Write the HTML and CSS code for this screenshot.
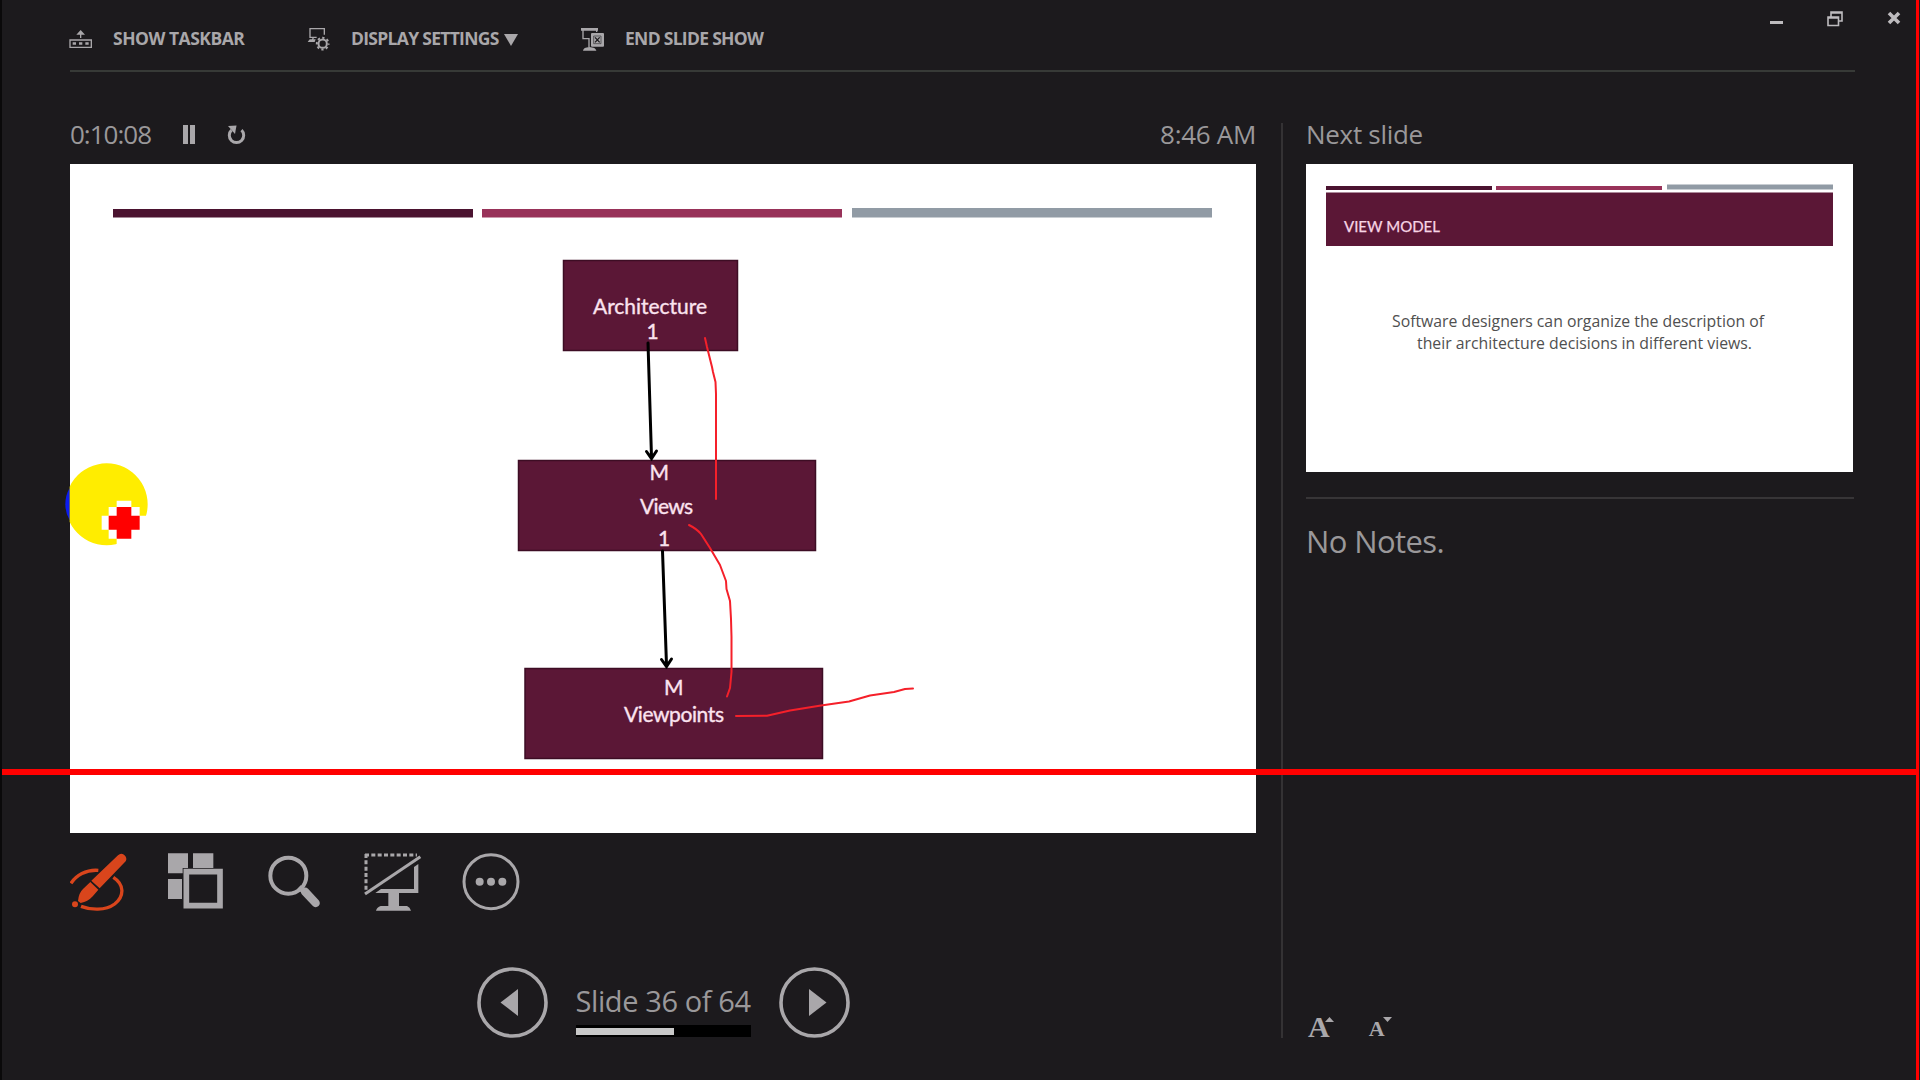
FILE: index.html
```html
<!DOCTYPE html>
<html lang="en">
<head>
<meta charset="utf-8">
<title>Presenter View</title>
<link rel="stylesheet" href="styles.css">
</head>
<body>
<div class="presenter">
  <header class="topbar">
    <nav class="commands">
      <button class="command taskbar">
        <svg width="24" height="24" viewBox="57 54 72 72"><path fill="none" stroke="currentColor" stroke-width="4" d="M60 90h64v22H60zM92 84V66"/><path fill="currentColor" d="M92 60l13 14H79zM68 97h10v7H68zM87 97h10v7H87zM106 97h10v7h-10z"/></svg>
        <span>SHOW TASKBAR</span>
      </button>
      <button class="command display">
        <svg width="24" height="24" viewBox="771 54 72 72"><path fill="none" stroke="currentColor" stroke-width="4" d="M780 82V56h43v18M778 82h22M790 82l-3 10"/><path fill="currentColor" d="M779 88h18l-3 8h-21z"/><circle cx="818" cy="101" r="12.500" fill="none" stroke="currentColor" stroke-width="6"/><circle cx="818" cy="101" r="17.500" fill="none" stroke="currentColor" stroke-width="6" stroke-dasharray="6.87 6.87" stroke-dashoffset="3.440"/></svg>
        <span>DISPLAY SETTINGS</span>
        <svg class="caret" width="14" height="12" viewBox="0 0 14 12"><path fill="currentColor" d="M0 0h14L7 12z"/></svg>
      </button>
      <button class="command end">
        <svg width="24" height="24" viewBox="393 54 72 72"><path fill="none" stroke="currentColor" stroke-width="4" d="M399 58v28h18v26M440 58v8"/><path fill="currentColor" d="M393 54h51v8h-51zM399 122c1-7 7-10 19-11 13 1 19 4 21 11z"/><rect x="423" y="69" width="39" height="41" rx="3" fill="currentColor"/><path fill="none" stroke="#1c1a1d" stroke-width="3" d="M431 78h22v23h-22z" opacity=".55"/><path fill="none" stroke="#1c1a1d" stroke-width="4" d="M435 82l14 15M449 82l-14 15"/></svg>
        <span>END SLIDE SHOW</span>
      </button>
    </nav>
    <div class="window-controls">
      <svg width="14" height="16" viewBox="0 0 14 16"><path fill="currentColor" d="M0 10h13v3H0z"/></svg>
      <svg width="16" height="16" viewBox="0 0 16 16"><path fill="none" stroke="currentColor" stroke-width="1.6" d="M4 6V1h11v9h-3M1 6h10.500v8.500H1zM4 2h11M1 7h11"/></svg>
      <svg width="14" height="14" viewBox="0 0 14 14"><path fill="none" stroke="currentColor" stroke-width="3.600" d="M2 2l10 10M12 2L2 12"/></svg>
    </div>
  </header>
  <hr class="top-rule">

  <main class="workspace">
    <section class="current">
      <div class="status">
        <span class="elapsed">0:10:08</span>
        <svg class="pause" width="12" height="19" viewBox="0 0 12 19"><path fill="currentColor" d="M0 0h5v19H0zM7 0h5v19H7z"/></svg>
        <svg class="restart" width="19" height="20" viewBox="0 0 19 20"><path fill="none" stroke="currentColor" stroke-width="3" d="M4.500 5.200A7.200 7.200 0 1 0 14.500 5.200"/><path fill="currentColor" d="M1 1l8.500-.5L8 9z"/></svg>
        <span class="clock">8:46 AM</span>
      </div>

      <svg class="slide" width="1186" height="669" viewBox="70 164 1186 669">
        <rect x="113" y="209" width="360" height="8.500" fill="#4b1330"/>
        <rect x="482" y="209" width="360" height="8.500" fill="#983259"/>
        <rect x="852" y="208" width="360" height="9.500" fill="#919ba5"/>
        <g class="box">
          <rect x="563.500" y="260.500" width="174" height="90"/>
          <rect x="518.500" y="460.500" width="297" height="90"/>
          <rect x="525" y="668.500" width="297.500" height="90"/>
        </g>
        <g class="arrow">
          <path d="M648 343l3.500 114M646.500 451.500l5 7 5-7.500"/>
          <path d="M662.500 551l4 114M661.500 659.500l5 7 5-7.500"/>
        </g>
        <g class="label">
          <text x="593" y="314" textLength="114">Architecture</text>
          <text x="646.500" y="338.500">1</text>
          <text x="649.500" y="479.500" textLength="18">M</text>
          <text x="640" y="514" textLength="53">Views</text>
          <text x="658" y="546">1</text>
          <text x="664" y="694.500" textLength="18">M</text>
          <text x="624" y="721.500" textLength="100">Viewpoints</text>
        </g>
        <g class="ink">
          <path d="M705 338l2 9 5 20 1 5 2.500 10 .5 12v105"/>
          <path d="M689 525q8 4 12 9l9 14 10 17 6 16 .5 8 3.500 12 1 18 .5 18v35l-1.500 16-3 8.500"/>
          <path d="M736 716l31-.3 23-5.200 31-5 28-4 21-6 24-3.500 11-3 8-.5"/>
        </g>
      </svg>

      <div class="tools">
        <svg class="pen" width="58" height="60" viewBox="60 66 174 180"><path fill="none" stroke="currentColor" stroke-width="10" d="M63 160C78 137 108 118 145 121M190 142C223 163 224 198 194 222C166 243 122 240 93 229"/><path fill="currentColor" d="M204 76q8-8 18-2 11 9 5 20l-78 81-25-23zM121 156l24 23-16 19q-15 17-37 21l-8-6q2-24 15-36z"/><circle cx="75" cy="223" r="9" fill="currentColor"/></svg>
        <svg width="58" height="60" viewBox="354 66 174 180"><path fill="currentColor" d="M354 70h60v44h-16v16h-44zM429 70h61v44h-61zM354 147h42v60h-42z"/><path fill="none" stroke="currentColor" stroke-width="17" d="M409 125h101v102H409z"/></svg>
        <svg width="58" height="60" viewBox="648 66 174 180"><circle cx="715" cy="137" r="54" fill="none" stroke="currentColor" stroke-width="12"/><path stroke="currentColor" stroke-width="25" stroke-linecap="round" d="M765 185l32 34"/><path stroke="currentColor" stroke-width="14" d="M747 171l15 15"/></svg>
        <svg width="58" height="60" viewBox="162 66 174 180"><path fill="none" stroke="currentColor" stroke-width="9" stroke-dasharray="12 7" d="M165 75h156M168 72v113"/><path fill="none" stroke="currentColor" stroke-width="9" d="M165 192L331 80"/><path fill="currentColor" d="M312 111l13-9v87h-58v39h24q9 3 12 14H198q3-11 14-14h23v-39h-39l17-12h99z"/></svg>
        <svg width="58" height="60" viewBox="456 66 174 180"><circle cx="543" cy="155" r="81" fill="none" stroke="currentColor" stroke-width="9"/><g fill="currentColor"><circle cx="509" cy="155" r="12"/><circle cx="543" cy="155" r="12"/><circle cx="577" cy="155" r="12"/></g></svg>
      </div>

      <div class="pager">
        <svg width="71" height="71" viewBox="0 0 71 71"><circle cx="35.500" cy="35.500" r="33.500" fill="none" stroke="currentColor" stroke-width="3.600"/><path fill="currentColor" d="M23.500 35.500L41 22v27z"/></svg>
        <div class="position">
          <span class="count">Slide 36 of 64</span>
          <div class="progress"><div class="progress-fill" style="width:56.25%"></div></div>
        </div>
        <svg width="71" height="71" viewBox="0 0 71 71"><circle cx="35.500" cy="35.500" r="33.500" fill="none" stroke="currentColor" stroke-width="3.600"/><path fill="currentColor" d="M47.500 35.500L30 22v27z"/></svg>
      </div>
    </section>

    <div class="divider"></div>

    <aside class="upcoming">
      <h2 class="heading">Next slide</h2>
      <svg class="slide" width="547" height="308" viewBox="1306 164 547 308">
        <rect x="1326" y="186" width="166" height="4" fill="#4b1330"/>
        <rect x="1496" y="186" width="166" height="4" fill="#983259"/>
        <rect x="1667" y="184.500" width="166" height="5" fill="#919ba5"/>
        <rect x="1326" y="192.500" width="507" height="53.500" fill="#5b1736"/>
        <text class="thumb-title" x="1344" y="232" textLength="96" lengthAdjust="spacingAndGlyphs">VIEW MODEL</text>
        <text class="thumb-body" x="1392" y="326.500" textLength="372" lengthAdjust="spacingAndGlyphs">Software designers can organize the description of</text>
        <text class="thumb-body" x="1417" y="349" textLength="335" lengthAdjust="spacingAndGlyphs">their architecture decisions in different views.</text>
      </svg>
      <hr class="notes-rule">
      <p class="notes">No Notes.</p>
      <div class="text-size">
        <button class="larger">A<svg width="9" height="5" viewBox="0 0 9 5"><path fill="currentColor" d="M0 5l4.500-5L9 5z"/></svg></button>
        <button class="smaller">A<svg width="9" height="5" viewBox="0 0 9 5"><path fill="currentColor" d="M0 0h9L4.500 5z"/></svg></button>
      </div>
    </aside>
  </main>

  <svg class="pointer" width="86" height="86" viewBox="45 70 258 258">
    <path fill="#0b1cf0" d="M59 145q-13 22-13 49t13 48z"/>
    <path fill="#ffed00" d="M59 141A123 123 0 1 1 59 247z"/>
    <path fill="#fff" d="M200 183h44v19h25v26h24v42h-24v27h-25v22h-44v-22h-24v-27h-21v-42h21v-26h24z"/>
    <path fill="#f00" d="M200 202h44v26h25v42h-25v27h-44v-27h-24v-42h24z"/>
  </svg>
  <div class="guide-h"></div>
  <div class="guide-v"></div>
</div>
</body>
</html>
```
FILE: styles.css
```css
* { box-sizing: border-box; }

body {
  margin: 0;
  background: #1c1a1d;
  color: #a9a7aa;
  font-family: "Open Sans", "Noto Sans", sans-serif;
}

button {
  padding: 0;
  border: 0;
  background: none;
  color: inherit;
  font: inherit;
}

svg { display: block; flex: none; }

.presenter {
  position: relative;
  width: 1920px;
  height: 1080px;
  overflow: hidden;
  border-left: 2px solid #0a090a;
  padding-left: 68px;
}

.topbar {
  display: flex;
  justify-content: space-between;
  height: 70px;
  padding-right: 19px;
}

.commands { display: flex; padding-top: 28px; margin-left: -1px; }
.command {
  display: flex;
  align-items: center;
  height: 24px;
  gap: 20px;
  font-size: 17.5px;
  font-weight: 700;
  line-height: 24px;
  letter-spacing: -0.7px;
  white-space: nowrap;
}
.command span { margin-top: -4px; }
.taskbar { width: 238px; letter-spacing: -0.5px; }
.display { width: 274px; }
.command .caret { margin-left: -15px; }

.window-controls { display: flex; gap: 43px; padding-top: 11px; color: #bdbbbe; }
.window-controls svg:nth-child(-n+2) { margin-left: -1px; margin-right: 1px; }

.top-rule {
  width: 1785px;
  height: 2px;
  margin: 0;
  border: 0;
  background: #373a37;
}

.workspace { display: flex; height: 966px; padding-top: 51px; }
.current { display: flex; flex-direction: column; width: 1186px; }
.slide { background: #fff; }

.status {
  display: flex;
  align-items: flex-start;
  height: 41px;
  font-size: 26px;
  line-height: 22px;
  color: #9a989a;
}
.elapsed { width: 113px; letter-spacing: -1px; }
.pause { margin-top: 2px; color: #a9a7aa; }
.restart { margin: 2px 0 0 32px; color: #a9a7aa; }
.clock { margin-left: auto; letter-spacing: -0.3px; }

.tools { display: flex; gap: 40px; margin-top: 19px; }
.pen { color: #d9451c; }

.pager { display: flex; justify-content: center; gap: 28px; margin-top: auto; }
.position { width: 175px; padding-top: 15px; }
.count {
  display: block;
  height: 43px;
  font-size: 29px;
  line-height: 37px;
  letter-spacing: -0.4px;
  white-space: nowrap;
  color: #9a989a;
}
.progress { height: 12px; padding: 3px 0 2px; background: #000; }
.progress-fill { height: 7px; background: #c8c8c8; }

.divider { width: 2px; margin: 0 24px 0 25px; background: #343234; }

.upcoming { display: flex; flex-direction: column; width: 548px; margin-left: -1px; }
.heading {
  height: 41px;
  margin: 0;
  font-size: 26px;
  font-weight: 400;
  line-height: 22px;
  letter-spacing: -0.3px;
  color: #9a989a;
}
.notes-rule { width: 548px; height: 2px; margin: 25px 0 0; border: 0; background: #373537; }
.notes {
  margin: 22px 0 0;
  font-size: 31px;
  line-height: 40px;
  letter-spacing: -0.6px;
  color: #9a989a;
}
.text-size {
  display: flex;
  align-items: flex-end;
  gap: 35px;
  margin: auto 0 0 2px;
  font-family: "Liberation Serif", serif;
  font-weight: 700;
}
.text-size button { display: flex; align-items: flex-start; }
.larger { font-size: 30px; line-height: 22px; }
.smaller { font-size: 22px; line-height: 18px; }
.larger svg { margin: 1px 0 0 -5px; }
.smaller svg { margin: -3px 0 0 -2px; }

.box { fill: #5b1736; stroke: #3d0d24; stroke-width: 1.500px; }
.arrow { fill: none; stroke: #000; stroke-width: 3px; stroke-linecap: round; }
.label { fill: #fbe3ef; stroke: #fbe3ef; stroke-width: .35px; font: 400 21px Lato, sans-serif; }
.ink { fill: none; stroke: #f5202a; stroke-width: 2px; stroke-linecap: round; stroke-linejoin: round; }
.thumb-title { fill: #f7d5e5; stroke: #f7d5e5; stroke-width: .25px; font: 16px Lato, sans-serif; }
.thumb-body { fill: #505050; font: 17px "Open Sans", sans-serif; }

.pointer { position: absolute; left: 63px; top: 463px; }
.guide-h {
  position: absolute;
  left: 0;
  top: 769px;
  width: 1914px;
  height: 6px;
  background: #f00;
}
.guide-v {
  position: absolute;
  right: 1px;
  top: 0;
  width: 3px;
  height: 1080px;
  background: #f00;
}
```
